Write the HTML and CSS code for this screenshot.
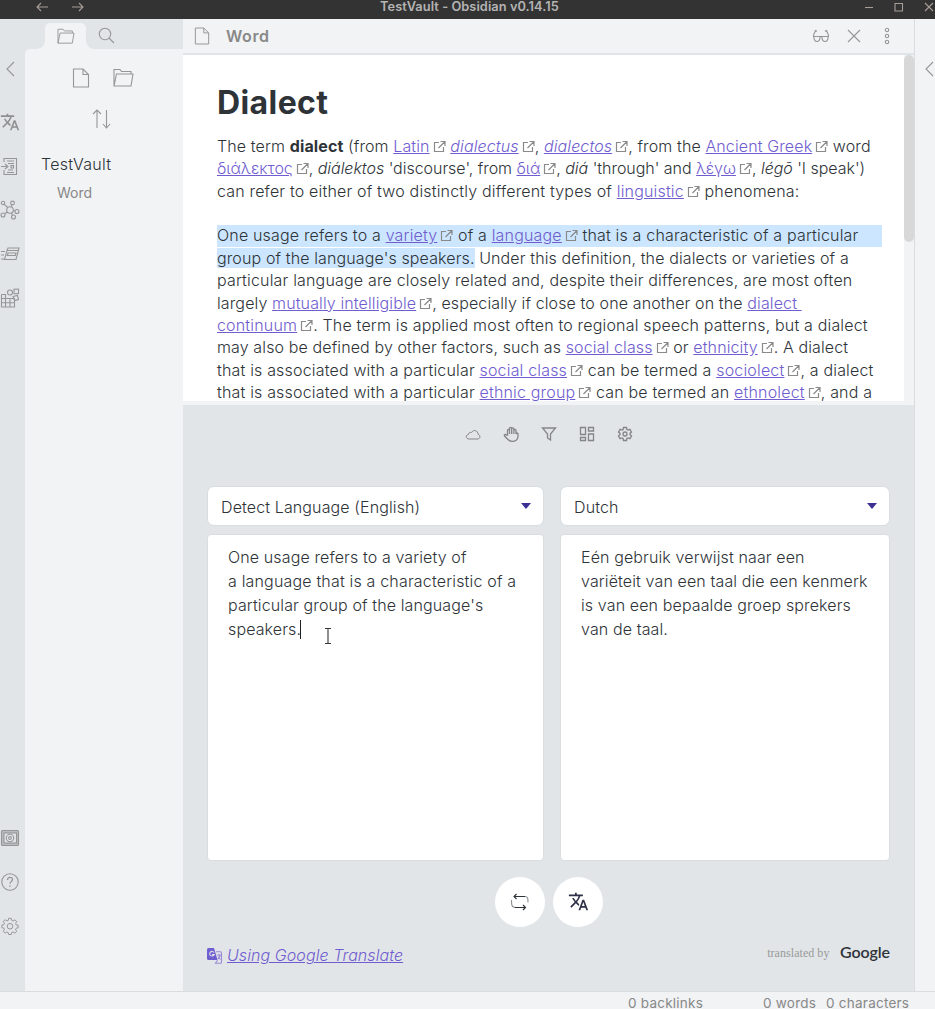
FILE: index.html
```html
<!DOCTYPE html>
<html lang="en">
<head>
<meta charset="utf-8">
<title>TestVault - Obsidian v0.14.15</title>
<link rel="stylesheet" href="styles.css">
</head>
<body>
<svg class="defs" aria-hidden="true">
  <symbol id="ext" viewBox="0 0 13 13"><path d="M6 2.5H1.5v9h9V7M7.5 1.5H12V6M12 1.5 5.5 8"/></symbol>
  <symbol id="file" viewBox="0 0 18 20"><path d="M1.5 1H11l5.500 5.500V19h-15zM11 1v5.500h5.500"/></symbol>
  <symbol id="folder" viewBox="0 0 21 19"><path d="M1 18V1.500h6l1.500 2H18v2.500M1 18 3.500 6H20L18 18z"/></symbol>
  <symbol id="lang" viewBox="0 0 24 24"><path d="M12.870 15.070l-2.540-2.510.03-.03A17.520 17.520 0 0 0 14.070 6H17V4h-7V2H8v2H1v1.990h11.170C11.500 7.920 10.440 9.750 9 11.350 8.070 10.320 7.300 9.190 6.690 8h-2c.73 1.630 1.730 3.170 2.980 4.560l-5.090 5.020L4 19l5-5 3.110 3.110.76-2.040zM18.500 10h-2L12 22h2l1.120-3h4.750L21 22h2l-4.500-12zm-2.620 7l1.620-4.330L19.120 17h-3.240z"/></symbol>
  <symbol id="gear" viewBox="0 0 20 20"><path d="M8.500 1.500h3l.5 2.300 1.500.6 2-1.300 2 2.100-1.300 2 .6 1.500 2.200.4v2.900l-2.200.5-.6 1.500 1.300 2-2.100 2-2-1.300-1.500.6-.5 2.200h-2.900l-.5-2.200-1.500-.6-2 1.300-2-2.100 1.300-2-.6-1.500L1 11.900V9l2.200-.5.6-1.500-1.300-2 2.100-2 2 1.300 1.500-.6z"/><circle cx="10" cy="10.300" r="3.100"/></symbol>
</svg>
<header class="titlebar">
  <div class="nav"><svg width="12" height="10"><path d="M12 5H1M5 1 1 5l4 4"/></svg><svg width="12" height="10"><path d="M0 5h11M7 1l4 4-4 4"/></svg></div>
  <div class="title">TestVault - Obsidian v0.14.15</div>
  <div class="wincontrols"><svg width="10" height="10"><path d="M1 5.500h8"/></svg><svg width="10" height="10"><path d="M1 1.500h7.500V9H1z"/></svg><svg width="10" height="10"><path d="m1 1 8 8M9 1 1 9"/></svg></div>
</header>
<main class="app">
  <nav class="ribbon">
    <svg class="chev" width="9" height="16"><path d="M8 1 1 8l7 7"/></svg>
    <svg class="filled" width="20" height="20"><use href="#lang"/></svg>
    <svg width="20" height="20"><path d="M4 6V2.500h12.500v16H4V14M7 5h7M8 7.500h6M8 14h5M7 16.500h7M1 10.500h6M5 8l3 2.500L5 13"/><rect x="11" y="9.500" width="2.500" height="2.500"/></svg>
    <svg width="20" height="20"><circle cx="10" cy="10" r="3.300"/><circle cx="3" cy="3" r="1.700"/><circle cx="12.500" cy="3" r="1.900"/><circle cx="17" cy="11.500" r="2"/><circle cx="13.500" cy="17" r="2"/><circle cx="3" cy="15" r="2"/><path d="m4.300 4.300 3.300 3.200M12 5l-1 1.700M13.300 10.300l1.700.6M11.500 13l1 2.200M4.700 13.800 7.300 12"/></svg>
    <svg width="20" height="20"><path d="M7 6.500 8 4h11l-3 11.500H4.500L7 6.500h11M8 9h8l-.6 2.500H7.300zM1 7.500h4M1 11h3M1 15h3"/></svg>
    <svg width="20" height="20"><path d="M1.500 6.500h4V19M1.500 6.500V19h13v-8.500h-13M10 10.500V19M1.500 14.700h13M5.500 10.500H10"/><rect x="14" y="1.200" width="4.500" height="4.500"/><path d="m13 8.500 4.500-1 1 4-4 1z"/><circle cx="10" cy="4.500" r="2.500"/></svg>
    <span class="spacer"></span>
    <svg width="20" height="20"><rect class="vaultfill" x="1.500" y="2.500" width="17" height="15" rx="1"/><rect class="vaultin" x="4" y="5" width="12.500" height="10"/><circle cx="10" cy="10" r="3.700"/><circle cx="10" cy="10" r="1.400"/></svg>
    <svg width="20" height="20"><circle cx="10" cy="10" r="8.200"/><path d="M7.500 8c0-3.500 5-3.500 5-.5 0 1.800-2.500 2-2.500 4.300M10 13.300v1.500" stroke-width="1.300"/></svg>
    <svg class="ribgear" width="18" height="18"><use href="#gear"/></svg>
  </nav>
  <aside class="sidebar">
    <div class="tabs"><div class="tab"><svg width="18" height="16"><use href="#folder"/></svg></div><svg class="search" width="17" height="17"><circle cx="7" cy="7" r="5.700"/><path d="m11 11 5 5"/></svg></div>
    <div class="panel">
      <div class="tools"><svg width="18" height="20"><use href="#file"/></svg><svg width="21" height="19"><use href="#folder"/></svg></div>
      <svg class="sort" width="20" height="20"><path d="M5 19V1M1 5l4-4 4 4M14.500 1v18M11 15l3.500 4 3.500-4"/></svg>
      <div class="vaultname">TestVault</div>
      <div class="note">Word</div>
    </div>
  </aside>
  <section class="workspace">
    <div class="viewhead">
      <svg width="16" height="18"><use href="#file"/></svg><span class="viewtitle">Word</span>
      <svg width="18" height="14"><path d="M1 7.500h16M2 8c-.5 6 6 6 6 .5C8.300 7 9.700 7 10 8.500c0 5.500 6.500 5.500 6-.5M1.200 7 3.500 1.500l1.500.8M16.800 7l-2.300-5.500-1.500.8"/></svg>
      <svg class="close" width="14" height="14"><path d="m1 1 12 12M13 1 1 13"/></svg>
      <svg class="more" width="6" height="18"><circle cx="3" cy="3" r="1.700"/><circle cx="3" cy="9" r="1.700"/><circle cx="3" cy="15" r="1.700"/></svg>
    </div>
    <div class="editor">
      <article class="article">
        <h1>Dialect</h1>
        <p><span class="l">The term <b>dialect</b> (from <a>Latin</a><svg class="x"><use href="#ext"/></svg> <i><a>dialectus</a></i><svg class="x"><use href="#ext"/></svg>, <i><a>dialectos</a></i><svg class="x"><use href="#ext"/></svg>, from the <a>Ancient Greek</a><svg class="x"><use href="#ext"/></svg> word</span>
        <span class="l tight"><a>διάλεκτος</a><svg class="x"><use href="#ext"/></svg>, <i>diálektos</i> 'discourse', from <a>διά</a><svg class="x"><use href="#ext"/></svg>, <i>diá</i> 'through' and <a>λέγω</a><svg class="x"><use href="#ext"/></svg>, <i>légō</i> 'I speak')</span>
        <span class="l wide">can refer to either of two distinctly different types of <a>linguistic</a><svg class="x"><use href="#ext"/></svg> phenomena:</span></p>
        <p><span class="l sel wide">One usage refers to a <a>variety</a><svg class="x"><use href="#ext"/></svg> of a <a>language</a><svg class="x"><use href="#ext"/></svg> that is a characteristic of a particular</span>
        <span class="l"><mark>group of the language's speakers.</mark> Under this definition, the dialects or varieties of a</span>
        <span class="l wide">particular language are closely related and, despite their differences, are most often</span>
        <span class="l">largely <a>mutually intelligible</a><svg class="x"><use href="#ext"/></svg>, especially if close to one another on the <a>dialect&nbsp;</a></span>
        <span class="l wide"><a>continuum</a><svg class="x"><use href="#ext"/></svg>. The term is applied most often to regional speech patterns, but a dialect</span>
        <span class="l">may also be defined by other factors, such as <a>social class</a><svg class="x"><use href="#ext"/></svg> or <a>ethnicity</a><svg class="x"><use href="#ext"/></svg>. A dialect</span>
        <span class="l wide">that is associated with a particular <a>social class</a><svg class="x"><use href="#ext"/></svg> can be termed a <a>sociolect</a><svg class="x"><use href="#ext"/></svg>, a dialect</span>
        <span class="l wide">that is associated with a particular <a>ethnic group</a><svg class="x"><use href="#ext"/></svg> can be termed an <a>ethnolect</a><svg class="x"><use href="#ext"/></svg>, and a</span></p>
      </article>
      <div class="scroll"><div class="thumb"></div></div>
    </div>
    <div class="translator">
      <div class="actions">
        <svg width="16" height="16"><path class="thin" d="M4 13h9c2.500-.5 2.500-4 .2-4.500C13 4.500 8.500 3 6.500 6.500 4.500 6 3.500 7 3.500 8.500 0 9 1 13 4 13z"/></svg>
        <svg width="16" height="16"><path d="M4.500 9V4.500c0-1.500 2-1.500 2 0V8 2.500c0-1.500 2.200-1.500 2.200 0V8 3c0-1.500 2.200-1.500 2.200 0v5-3.500c0-1.500 2.100-1.500 2.100 0V8c.3-1.500 2-1.200 2 0v2c0 6-7 6.500-10 3.500L1.500 10c-.8-1.500 1-2 1.700-1z"/></svg>
        <svg width="16" height="16"><path d="M1.500 2h13L9.500 8v6l-3-2V8z"/></svg>
        <svg width="16" height="16"><path d="M1.500 1.500h5v7h-5zM9.500 1.500h5v3.500h-5zM9.500 8h5v6.500h-5zM1.500 11.500h5v3h-5z"/></svg>
        <svg width="16" height="16" viewBox="0 0 16 16"><path d="m6.500 1.500-.4 2-1 .6-2-.7-1.600 2.700L3 7.400v1.200L1.500 10l1.600 2.600 2-.7 1 .6.400 2h3l.4-2 1-.6 2 .7 1.600-2.600L13 8.600V7.400l1.500-1.300-1.600-2.700-2 .7-1-.6-.4-2z"/><circle cx="8" cy="8" r="2"/></svg>
      </div>
      <div class="grid">
        <div class="select"><span>Detect Language (English)</span><i class="arrow"></i></div>
        <div class="select"><span>Dutch</span><i class="arrow"></i></div>
        <div class="area"><span class="l">One usage refers to a variety of</span><span class="l wide">a language that is a characteristic of a</span><span class="l">particular group of the language's</span><span class="l">speakers.<i class="caret"></i><svg class="ibeam" width="8" height="16"><path d="M1 .500h2.500l.5.500.5-.5H7M4 1v14M1 15.500h2.500L4 15l.5.500H7"/></svg></span></div>
        <div class="area"><span class="l">Eén gebruik verwijst naar een</span><span class="l">variëteit van een taal die een kenmerk</span><span class="l">is van een bepaalde groep sprekers</span><span class="l">van de taal.</span></div>
      </div>
      <div class="buttons">
        <div class="round"><svg width="20" height="18"><path d="M15.500 3.500H4M6.500 1 4 3.500 6.500 6M4.500 14.500h11M13 12l2.500 2.500L13 17"/><path class="soft" d="M15.500 3.500c2.500.5 2.500 2 2.500 6M4.500 14.500c-3-1-3-2.500-3-7.500"/></svg></div>
        <div class="round"><svg class="filled" width="21" height="21"><use href="#lang"/></svg></div>
      </div>
      <footer class="credit">
        <svg class="gt" width="16" height="16"><path class="gbody" d="M1.500 0H7l3.500 12h-9Q0 12 0 10.500v-9Q0 0 1.500 0z"/><path class="gcut" d="M7 4.500a2.300 2.300 0 1 0 .2 2H5"/><path class="gside" d="M9 3.700h4.500q1 0 1 1v9.500q0 1-1 1H8.500l2-3M10 7h4M12 6v1M13.300 7c-.5 2-1.300 3-2.500 4M11 8.500l2.500 3"/></svg>
        <a class="using">Using Google Translate</a>
        <span class="by">translated by</span><span class="google">Google</span>
      </footer>
    </div>
  </section>
  <aside class="rightribbon"><svg width="9" height="16"><path d="M8 1 1 8l7 7"/></svg></aside>
</main>
<footer class="status"><span>0 backlinks</span><span class="words">0 words</span><span class="chars">0 characters</span></footer>
</body>
</html>
```
FILE: styles.css
```css
* { box-sizing: border-box; }
body { margin: 0; width: 935px; height: 1009px; overflow: hidden; display: flex; flex-direction: column; background: #f1f3f5; color: #2e3338; font: 300 16px/22.4px Inter, sans-serif; letter-spacing: 0.12px; }
svg { display: block; flex: none; fill: none; stroke: #969696; stroke-width: 1.1; overflow: visible; }
.defs { position: absolute; width: 0; height: 0; }
.filled { fill: #8f8f8f; stroke: none; }
.titlebar { height: 19px; flex: none; background: #333; display: flex; align-items: center; padding-bottom: 6px; }
.nav { width: 380px; padding-left: 36px; display: flex; gap: 24px; }
.titlebar svg { stroke: #a79c98; }
.title { width: 480px; font-size: 12.8px; line-height: 13px; font-weight: 600; color: #b4b4b4; white-space: nowrap; letter-spacing: 0.06px; }
.wincontrols { display: flex; gap: 20px; padding-left: 4px; }
.app { display: flex; height: 972px; flex: none; }
.ribbon { width: 25px; background: #e1e5e8; display: flex; flex-direction: column; padding: 42px 0 56px; gap: 24px; }
.chev { margin: 0 0 11px 6px; }
.ribgear { margin: 1px 0 0 1px; }
.spacer { flex: 1; }
.vaultfill { fill: #b9bcbe; }
.vaultin { fill: #e1e5e8; }
.sidebar { width: 158px; background: #e1e5e8; }
.tabs { height: 30px; display: flex; padding: 4px 0 0 20px; }
.tab { position: relative; width: 41px; height: 26px; border-radius: 5px 5px 0 0; background: #f1f3f5; padding: 5px 0 0 12px; }
.tab::before, .tab::after { content: ""; position: absolute; bottom: 0; width: 8px; height: 8px; }
.tab::before { left: -8px; background: radial-gradient(circle at 0 0, #e1e5e8 7.5px, #f1f3f5 8px); }
.tab::after { right: -8px; background: radial-gradient(circle at 100% 0, #e1e5e8 7.5px, #f1f3f5 8px); }
.search { margin: 4px 0 0 12px; }
.panel { height: 942px; border-radius: 5px 0 0; background: #f1f3f5; }
.tools { display: flex; gap: 23px; padding: 19px 0 0 47px; }
.sort { margin: 21px 0 0 67px; }
.vaultname { margin: 24px 0 0 16px; line-height: 23px; letter-spacing: 0.25px; }
.note { margin: 6px 0 0 32px; font-size: 14px; line-height: 21px; color: #888; font-weight: 400; letter-spacing: 0; }
.workspace { width: 732px; border-right: 1px solid #dadcde; display: flex; flex-direction: column; }
.viewhead { height: 36px; flex: none; border-bottom: 2px solid #dfe4e8; display: flex; align-items: center; padding-left: 11px; }
.viewtitle { width: 602px; padding-left: 16px; font-weight: 600; color: #888; letter-spacing: 0.6px; }
.viewhead .close { margin-left: 17px; }
.viewhead .more { margin-left: 23px; }
.editor { height: 350px; flex: none; display: flex; background: #fff; border-bottom: 4px solid #f1f3f5; overflow: hidden; }
.article { width: 721px; padding: 28px 0 0 34px; }
h1 { margin: 0; font-size: 32px; line-height: 40px; font-weight: 700; letter-spacing: 0.4px; }
p { margin: 11.8px 0 22.400px; white-space: normal; }
p + p { margin: 0; }
b { font-weight: 700; }
.l { display: block; white-space: nowrap; }
.wide { letter-spacing: 0.175px; }
.tight { letter-spacing: -0.03px; }
.sel { width: 665px; background: linear-gradient(transparent 1px, #cce6ff 1px); }
mark { background: #cce6ff; color: inherit; }
a { color: #705dcf; text-decoration: underline; }
.x { display: inline-block; width: 13px; height: 13px; margin-left: 3px; vertical-align: -1px; stroke: #8a8a8a; stroke-width: 1.2; }
.scroll { width: 10px; background: #f1f3f5; flex: none; }
.thumb { height: 187px; border-radius: 5px; background: #d8d8d8; }
.translator { flex: 1; background: #e1e5e8; padding: 21px 24px 0; }
.actions { height: 16px; display: flex; gap: 22px; padding-left: 258px; }
.actions svg { stroke: #858585; stroke-width: 1.300; }
.actions .thin { stroke-width: 1; }
.grid { margin-top: 44px; display: grid; grid-template: 40px 327px / 337px 330px; gap: 7.500px 16px; }
.select { background: #fff; border: 1px solid #dadde0; border-radius: 7px; padding: 2px 12px 0 13px; display: flex; align-items: center; justify-content: space-between; }
.arrow { border: solid transparent; border-width: 6px 5.500px 0; border-top-color: #3b2f92; margin-top: -2px; }
.area { background: #fff; border: 1px solid #dadde0; border-radius: 4px; padding: 10px 20px; line-height: 24px; }
.caret { display: inline-block; width: 1px; height: 19px; margin-left: -1px; background: #222; vertical-align: -4px; }
.ibeam { display: inline-block; margin-left: 23px; vertical-align: -9px; stroke: #333; }
.buttons { display: flex; justify-content: center; gap: 8px; margin-top: 16px; padding-left: 1px; }
.round { width: 50px; height: 50px; border-radius: 50%; background: #fff; display: grid; place-items: center; }
.round svg { stroke: #2e3338; }
.round .soft { stroke: #8b8e92; }
.round .filled { fill: #2e3047; stroke: none; }
.credit { display: flex; align-items: center; height: 24px; margin-top: 17px; }
.gt .gbody { fill: #705dcf; stroke: none; }
.gt .gcut { stroke: #e1e5e8; }
.gt .gside { stroke: #9b8ad8; }
.using { width: 541px; margin-left: 4px; font-style: italic; letter-spacing: 0.08px; }
.by { font: 12px/16px "Liberation Serif", serif; letter-spacing: 0.05px; color: #999; width: 73px; white-space: nowrap; margin-top: -5px; }
.google { font: 600 16px/20px Lato, sans-serif; letter-spacing: -0.1px; margin-top: -7px; }
.rightribbon { padding: 42px 0 0 10px; }
.status { height: 18px; flex: none; border-top: 1px solid #dadcde; display: flex; padding-left: 628px; font-size: 13.5px; font-weight: 400; letter-spacing: 0.23px; line-height: 22px; color: #888; white-space: nowrap; }
.words { margin-left: 60px; }
.chars { margin-left: 10px; }
```
